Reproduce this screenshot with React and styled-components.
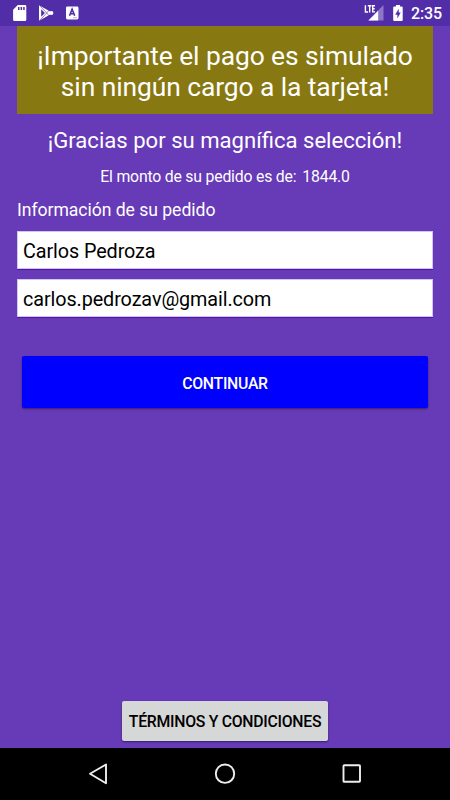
import React from 'react';
import styled, { createGlobalStyle } from 'styled-components';

const GlobalStyle = createGlobalStyle`
  * {
    box-sizing: border-box;
  }

  body {
    margin: 0;
    background: #673ab7;
    font-family: Roboto, sans-serif;
  }
`;

const Screen = styled.div`
  display: flex;
  flex-direction: column;
  width: 450px;
  height: 800px;
  overflow: hidden;
  background: #673ab7;
  color: #fff;
`;

const StatusBar = styled.header`
  display: flex;
  align-items: center;
  justify-content: space-between;
  flex: none;
  height: 26px;
  padding: 0 8px 0 12px;
  background: #512da8;
`;

const StatusGroup = styled.div`
  display: flex;
  align-items: center;
  height: 26px;

  svg {
    display: block;
  }
`;

const Clock = styled.span`
  margin-left: 7px;
  padding-top: 2px;
  font-size: 16px;
  font-weight: 500;
  line-height: 26px;
  letter-spacing: -0.1px;
`;

const Content = styled.main`
  display: flex;
  flex-direction: column;
  flex: 1;
  padding: 0 17px 7px;
`;

const Banner = styled.h1`
  height: 88px;
  margin: 0;
  padding-top: 15px;
  background: #877812;
  font-size: 26.4px;
  font-weight: 400;
  line-height: 31px;
  letter-spacing: -0.08px;
  text-align: center;
  white-space: nowrap;
`;

const Label = styled.p`
  margin: ${props => props.gap}px 0 0;
  font-size: ${props => props.size}px;
  line-height: ${props => props.line}px;
  letter-spacing: ${props => props.spacing || 0}px;
  text-align: ${props => props.align || 'center'};
  white-space: nowrap;
`;

const Amount = styled.span`
  margin-left: 6px;
`;

const Fields = styled.div`
  margin-top: 10px;
`;

const Field = styled.input`
  display: block;
  width: 416px;
  height: 38px;
  margin: 0 0 10px;
  padding: 2px 5px 0;
  border: 1px solid #d3c6ec;
  border-radius: 0;
  outline: 0;
  background: #fff;
  box-shadow: 0 1px 0 #5410b0;
  color: #000;
  font-family: inherit;
  font-size: 19.8px;
  letter-spacing: -0.09px;
`;

const Button = styled.button`
  height: 52px;
  margin: 29px 5px 0;
  padding: 2px 0 0;
  border: 0;
  border-radius: 2px;
  background: #00f;
  box-shadow: 0 1px 2px rgba(0, 0, 0, 0.45);
  color: #fff;
  font-family: inherit;
  font-size: 15.8px;
  font-weight: 500;
  letter-spacing: -0.28px;
  text-transform: uppercase;
`;

const TermsButton = styled(Button)`
  align-self: center;
  width: 206px;
  height: 40px;
  margin: auto 0 0;
  padding: 1px 0 0;
  background: #d6d7d7;
  color: #000;
  white-space: nowrap;
`;

const NavBar = styled.nav`
  display: flex;
  justify-content: space-between;
  flex: none;
  height: 52px;
  padding: 14px 86px 0;
  background: #000;
`;

const NavIcon = ({ children }) => (
  <svg width="24" height="24" viewBox="0 0 24 24" fill="none" stroke="#eee" strokeWidth="1.9" strokeLinejoin="round">
    {children}
  </svg>
);

const NotificationIcons = () => (
  <svg width="68" height="26" viewBox="12 0 68 26" fill="#fff">
    <path
      fillRule="evenodd"
      d="M17.8 5H25a1.3 1.3 0 0 1 1.3 1.3v13.4A1.3 1.3 0 0 1 25 21H14.4a1.3 1.3 0 0 1-1.3-1.3V9.8ZM18 7v3h1.5V7Zm2.6 0v3h1.5V7Zm2.6 0v3h1.5V7Z"
    />
    <path d="M39 5.2 53 13 39 20.8Z" />
    <path d="M41.2 9.2 44.9 13 41.2 16.8Z" fill="#512da8" />
    <path d="m39.5 5.2 10.5 11.5M39.5 20.8 50 9.3" stroke="#512da8" strokeWidth="0.6" fill="none" />
    <circle cx="51.5" cy="13" r="1.9" />
    <rect x="66" y="6.5" width="12.5" height="13" rx="1.4" />
    <path d="m69.5 15.7 2.6-6.5 2.6 6.5M70.6 13.7h3" fill="none" stroke="#512da8" strokeWidth="1.6" />
    <path d="M73 17.8h4" stroke="#b9abd8" strokeWidth="1" />
  </svg>
);

const SystemIcons = () => (
  <svg width="40" height="26" viewBox="364 0 40 26" fill="#fff">
    <path d="M383.5 5v15.5H368Z" opacity="0.35" />
    <path d="M378.2 10.8v9.7h-9.7Z" />
    <path
      d="M365.4 5.2v6.8h2.7M367.8 5.8h3.7M369.7 5.8v6.8M375 5.8h-2.3v6.1h2.3M372.7 8.8h2"
      fill="none"
      stroke="#fff"
      strokeWidth="1.4"
    />
    <path d="M396 5h4v1.6h1.7a1 1 0 0 1 1 1V20a1 1 0 0 1-1 1h-7.5a1 1 0 0 1-1-1V7.6a1 1 0 0 1 1-1h1.8Z" />
    <path d="m398.7 8.7-3.5 6h2.2v3.8l3.3-6h-2Z" fill="#512da8" />
  </svg>
);

export default function App() {
  return (
    <>
      <GlobalStyle />
      <Screen>
        <StatusBar>
          <StatusGroup>
            <NotificationIcons />
          </StatusGroup>
          <StatusGroup>
            <SystemIcons />
            <Clock>2:35</Clock>
          </StatusGroup>
        </StatusBar>
        <Content>
          <Banner>
            ¡Importante el pago es simulado
            <br />
            sin ningún cargo a la tarjeta!
          </Banner>
          <Label gap={13} size={22.1} line={27}>¡Gracias por su magnífica selección!</Label>
          <Label gap={13} size={15.8} line={20} spacing={-0.2}>
            El monto de su pedido es de:
            <Amount>1844.0</Amount>
          </Label>
          <Label gap={12} size={17.6} line={22} spacing={-0.04} align="left">Información de su pedido</Label>
          <Fields>
            <Field defaultValue="Carlos Pedroza" />
            <Field defaultValue="carlos.pedrozav@gmail.com" />
          </Fields>
          <Button>Continuar</Button>
          <TermsButton>Términos y condiciones</TermsButton>
        </Content>
        <NavBar>
          <NavIcon>
            <path d="M20 2.5v18.7L4 11.8Z" />
          </NavIcon>
          <NavIcon>
            <circle cx="12" cy="11.7" r="9.2" />
          </NavIcon>
          <NavIcon>
            <rect x="3.5" y="3.3" width="16.5" height="16.5" rx="0.8" />
          </NavIcon>
        </NavBar>
      </Screen>
    </>
  );
}
